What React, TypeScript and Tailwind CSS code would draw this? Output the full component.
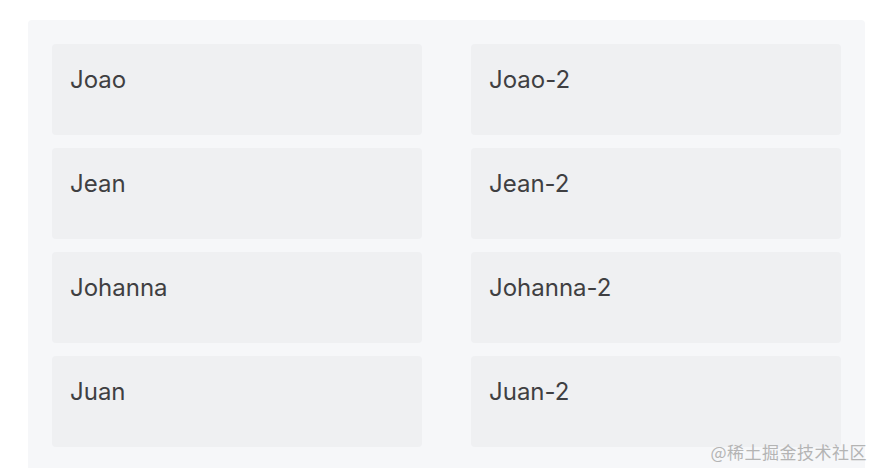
import { Fragment } from "react";

const names = ["Joao", "Jean", "Johanna", "Juan"];

function Card({ label }: { label: string }) {
  return (
    <div className="h-[91px] rounded-[4px] bg-[#eff0f2] px-[18px] pt-[20px] text-2xl leading-8 text-[#3f3f42]">
      {label}
    </div>
  );
}

export default function App() {
  return (
    <div className="relative h-[468px] w-[875px] overflow-hidden bg-white font-['Inter',sans-serif]">
      <div className="ml-[28px] mt-[20px] w-[837px] rounded-[4px] bg-[#f6f7f9] p-6">
        <div className="grid grid-cols-2 gap-x-[49px] gap-y-[13px]">
          {names.map((n) => (
            <Fragment key={n}>
              <Card label={n} />
              <Card label={`${n}-2`} />
            </Fragment>
          ))}
        </div>
      </div>
      <div className="absolute bottom-[6px] right-[8px] font-['Noto_Sans_CJK_SC',sans-serif] text-[17px] leading-5 tracking-[0.5px] text-[#b4b4b4]">
        @稀土掘金技术社区
      </div>
    </div>
  );
}
